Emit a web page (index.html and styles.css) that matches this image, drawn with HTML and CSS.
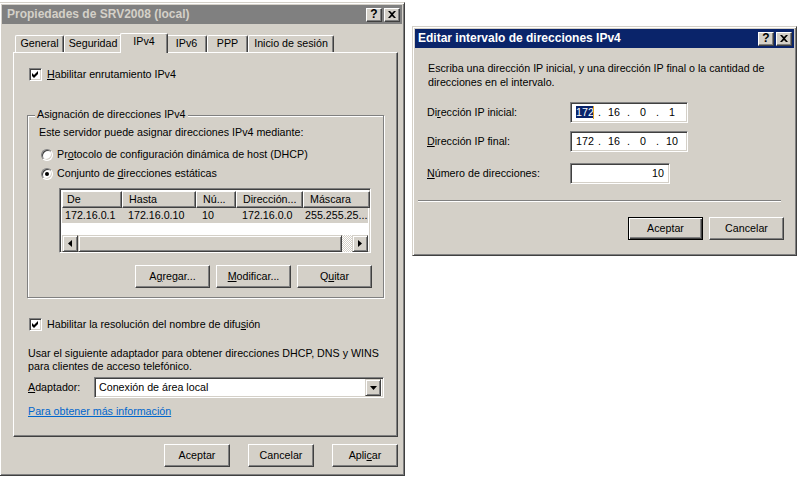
FILE: index.html
```html
<!DOCTYPE html>
<html lang="es">
<head>
	<meta charset="UTF-8">
	<title>Propiedades de SRV2008 (local)</title>
	<link rel="stylesheet" href="styles.css">
</head>
<body>
<div class="desk">

	<!-- ventana de propiedades (inactiva) -->
	<div class="win props">
		<div class="caption inactive">
			<span>Propiedades de SRV2008 (local)</span>
			<span class="cap-btns">
				<span class="cap-btn">?</span>
				<span class="cap-btn"><svg width="8" height="7" viewBox="0 0 8 7"><path d="M0 0h2l2 2 2-2h2L5 3.5 8 7H6L4 5 2 7H0l3-3.5z"/></svg></span>
			</span>
		</div>
		<div class="props-body">
			<div class="tabs">
				<span class="tab t-general">General</span>
				<span class="tab t-seg">Seguridad</span>
				<span class="tab sel t-ipv4">IPv4</span>
				<span class="tab t-ipv6">IPv6</span>
				<span class="tab t-ppp">PPP</span>
				<span class="tab t-inicio">Inicio de sesión</span>
			</div>
			<div class="panel">
				<div class="opt first">
					<span class="check sunken"><svg width="9" height="9" viewBox="0 0 9 9"><path d="M1 3 3 5 7 1v3L3 8 1 6z"/></svg></span>
					<span><u>H</u>abilitar enrutamiento IPv4</span>
				</div>

				<div class="group">
					<span class="legend">Asignación de direcciones IPv4</span>
					<div class="line">Este servidor puede asignar direcciones IPv4 mediante:</div>
					<div class="opt r1">
						<span class="radio"></span>
						<span>Pr<u>o</u>tocolo de configuración dinámica de host (DHCP)</span>
					</div>
					<div class="opt r2">
						<span class="radio on"></span>
						<span>Conjunto de <u>d</u>irecciones estáticas</span>
					</div>

					<div class="list sunken">
						<div class="lv-head">
							<span class="col c1">De</span>
							<span class="col c2">Hasta</span>
							<span class="col c3">Nú...</span>
							<span class="col c4">Dirección...</span>
							<span class="col c5">Máscara</span>
						</div>
						<div class="lv-row">
							<span class="col c1">172.16.0.1</span>
							<span class="col c2">172.16.0.10</span>
							<span class="col c3">10</span>
							<span class="col c4">172.16.0.0</span>
							<span class="col c5">255.255.25...</span>
						</div>
						<div class="lv-blank"></div>
						<div class="hscroll">
							<span class="sb-btn"><svg width="4" height="7" viewBox="0 0 4 7"><path d="M4 0v7L0 3.5z"/></svg></span>
							<span class="sb-thumb"></span>
							<span class="sb-track"></span>
							<span class="sb-btn"><svg width="4" height="7" viewBox="0 0 4 7"><path d="M0 0v7l4-3.5z"/></svg></span>
						</div>
					</div>

					<div class="btn-row">
						<button class="btn wide">A<u>g</u>regar...</button>
						<button class="btn wide"><u>M</u>odificar...</button>
						<button class="btn wide">Q<u>u</u>itar</button>
					</div>
				</div>

				<div class="opt second">
					<span class="check sunken"><svg width="9" height="9" viewBox="0 0 9 9"><path d="M1 3 3 5 7 1v3L3 8 1 6z"/></svg></span>
					<span>Habilitar la resolución del nombre de difu<u>s</u>ión</span>
				</div>

				<div class="text-block">Usar el siguiente adaptador para obtener direcciones DHCP, DNS y WINS<br>para clientes de acceso telefónico.</div>

				<div class="adapter">
					<span class="adapter-label"><u>A</u>daptador:</span>
					<div class="combo sunken">
						<span class="combo-text">Conexión de área local</span>
						<span class="combo-btn"><svg width="7" height="4" viewBox="0 0 7 4"><path d="M0 0h7L3.5 4z"/></svg></span>
					</div>
				</div>

				<a class="more" href="#">Para obtener más información</a>
			</div>

			<div class="dlg-btns">
				<button class="btn">Aceptar</button>
				<button class="btn">Cancelar</button>
				<button class="btn">Apli<u>c</u>ar</button>
			</div>
		</div>
	</div>

	<!-- dialogo de intervalo (activo) -->
	<div class="win range">
		<div class="caption active">
			<span>Editar intervalo de direcciones IPv4</span>
			<span class="cap-btns">
				<span class="cap-btn">?</span>
				<span class="cap-btn"><svg width="8" height="7" viewBox="0 0 8 7"><path d="M0 0h2l2 2 2-2h2L5 3.5 8 7H6L4 5 2 7H0l3-3.5z"/></svg></span>
			</span>
		</div>
		<div class="range-body">
			<div class="desc">Escriba una dirección IP inicial, y una dirección IP final o la cantidad de<br>direcciones en el intervalo.</div>

			<div class="field-row f1">
				<span class="field-label">Di<u>r</u>ección IP inicial:</span>
				<div class="ipbox sunken">
					<span class="oct"><span class="hl">172</span><span class="caret"></span></span><span class="dot">.</span>
					<span class="oct">16</span><span class="dot">.</span>
					<span class="oct">0</span><span class="dot">.</span>
					<span class="oct">1</span>
				</div>
			</div>
			<div class="field-row f2">
				<span class="field-label"><u>D</u>irección IP final:</span>
				<div class="ipbox sunken">
					<span class="oct">172</span><span class="dot">.</span>
					<span class="oct">16</span><span class="dot">.</span>
					<span class="oct">0</span><span class="dot">.</span>
					<span class="oct">10</span>
				</div>
			</div>
			<div class="field-row f3">
				<span class="field-label"><u>N</u>úmero de direcciones:</span>
				<div class="numbox sunken">10</div>
			</div>

			<div class="sep"></div>

			<div class="range-btns">
				<button class="btn wide default">Aceptar</button>
				<button class="btn wide">Cancelar</button>
			</div>
		</div>
	</div>

</div>
</body>
</html>
```

FILE: styles.css
```css
* { box-sizing:border-box; }
body { margin:0; background:#fff; font-family:"Liberation Sans", Arial, sans-serif; font-size:10.7px; line-height:13px; color:#000; }
u { text-decoration-thickness:1px; text-underline-offset:1px; }
.desk { position:relative; width:805px; height:490px; overflow:hidden; }

/* ventanas clasicas */
.win { position:absolute; display:flex; flex-direction:column; background:#d4d0c8; padding:2px;
	border:1px solid; border-color:#d4d0c8 #404040 #404040 #d4d0c8;
	box-shadow:inset 1px 1px #fff, inset -1px -1px #808080; }
.props { left:-1px; top:2px; width:406px; height:474px; }
.range { left:412px; top:26px; width:385px; height:230px; }

.caption { height:19px; flex:none; display:flex; align-items:center; justify-content:space-between; padding:0 2px 0 3px; font-size:12px; font-weight:bold; white-space:nowrap; }
.props .caption { padding-left:5px; }
.caption.inactive { background:#808080; color:#d4d0c8; }
.caption.active { background:#0a246a; color:#fff; }
.cap-btns { display:flex; gap:2px; }
.cap-btn { width:16px; height:14px; display:flex; align-items:center; justify-content:center; background:#d4d0c8; color:#000; font-size:12px; font-weight:bold;
	border:1px solid; border-color:#fff #404040 #404040 #fff; box-shadow:inset -1px -1px #808080; }

.sunken { background:#fff; border:1px solid; border-color:#808080 #fff #fff #808080; box-shadow:inset 1px 1px #404040, inset -1px -1px #d4d0c8; }

.btn { width:66px; height:23px; padding:0; display:flex; align-items:center; justify-content:center; font:inherit; color:#000; background:#d4d0c8;
	border:1px solid; border-color:#fff #404040 #404040 #fff; box-shadow:inset -1px -1px #808080; }
.btn.wide { width:75px; }
.btn.default { border-color:#000; box-shadow:inset 1px 1px #fff, inset -1px -1px #404040, inset -2px -2px #808080; }

/* propiedades */
.props-body { padding:9px 4px 0 11px; }
.tabs { display:flex; align-items:flex-end; height:19px; padding-left:2px; }
.tab { height:17px; display:flex; align-items:center; justify-content:center; padding-bottom:1px; white-space:nowrap;
	border:1px solid; border-bottom:0; border-color:#fff #404040 #404040 #fff; border-radius:2px 2px 0 0; box-shadow:inset -1px 0 #808080; }
.tab.sel { position:relative; z-index:1; height:20px; margin:0 -2px -1px; padding-bottom:4px; background:#d4d0c8; }
.t-general { width:49px; }
.t-seg { width:58px; }
.t-ipv4 { width:48px; }
.t-ipv6 { width:41px; }
.t-ppp { width:41px; }
.t-inicio { width:86px; }

.panel { width:385px; height:385px; padding:15px 0 0 14px;
	border:1px solid; border-color:#fff #404040 #404040 #fff; box-shadow:inset -1px -1px #808080; }
.opt { display:flex; align-items:center; height:13px; white-space:nowrap; }
.opt.first, .opt.second { margin-left:1px; gap:5px; }
.opt.second { margin-top:20px; }
.check { width:13px; height:13px; flex:none; display:flex; align-items:center; justify-content:center; }
.radio { width:12px; height:12px; flex:none; position:relative; border-radius:50%; background:#fff;
	border:1px solid; border-color:#808080 #fff #fff #808080; box-shadow:inset 1px 1px #404040, inset -1px -1px #d4d0c8; }
.radio.on:after { content:""; position:absolute; left:3px; top:3px; width:4px; height:4px; border-radius:50%; background:#000; }

.group { position:relative; width:357px; margin-top:34px; margin-left:-1px; padding:10px 11px 9px 11px;
	border:1px solid #808080; box-shadow:inset 1px 1px #fff, 1px 1px #fff; }
.legend { position:absolute; left:7px; top:-8px; padding:0 2px; background:#d4d0c8; white-space:nowrap; }
.line { white-space:nowrap; }
.opt.r1, .opt.r2 { margin-left:2px; gap:4px; }
.opt.r1 { margin-top:9px; }
.opt.r2 { margin-top:6px; }

.list { width:312px; height:65px; margin:8px 0 0 20px; padding:2px; display:flex; flex-direction:column; overflow:hidden; }
.lv-head, .lv-row { display:flex; flex:none; white-space:nowrap; }
.lv-head .col { height:17px; padding:1px 0 0 6px; background:#d4d0c8;
	border:1px solid; border-color:#fff #404040 #404040 #fff; box-shadow:inset -1px -1px #808080; }
.lv-head .c1 { padding-left:4px; }
.lv-row { height:15px; background:#d4d0c8; }
.lv-row .col { padding:1px 0 0 6px; }
.lv-row .c1 { padding-left:3px; }
.lv-row .c5 { padding-left:2px; }
.col { overflow:hidden; flex:none; }
.c1 { width:60px; }
.c2 { width:74px; }
.c3 { width:40px; }
.c4 { width:67px; }
.c5 { width:67px; }
.lv-blank { height:12px; flex:none; }
.hscroll { display:flex; height:17px; flex:none; }
.sb-btn { width:16px; display:flex; align-items:center; justify-content:center; background:#d4d0c8;
	border:1px solid; border-color:#d4d0c8 #404040 #404040 #d4d0c8; box-shadow:inset 1px 1px #fff, inset -1px -1px #808080; }
.sb-thumb { width:266px; background:#d4d0c8;
	border:1px solid; border-color:#d4d0c8 #404040 #404040 #d4d0c8; box-shadow:inset 1px 1px #fff, inset -1px -1px #808080; }
.sb-track { width:10px; background:repeating-conic-gradient(#fff 0 25%, #d4d0c8 0 50%) 0 0 / 2px 2px; }

.btn-row { display:flex; justify-content:flex-end; gap:6px; margin-top:12px; }

.text-block { margin-top:16px; white-space:nowrap; }
.adapter { display:flex; align-items:center; margin-top:4px; }
.adapter-label { width:66px; }
.combo { width:290px; height:21px; display:flex; align-items:center; justify-content:space-between; padding:2px; }
.combo-text { padding-left:2px; }
.combo-btn { width:16px; height:17px; display:flex; align-items:center; justify-content:center; background:#d4d0c8;
	border:1px solid; border-color:#d4d0c8 #404040 #404040 #d4d0c8; box-shadow:inset 1px 1px #fff, inset -1px -1px #808080; }
.more { display:inline-block; margin-top:7px; color:#0066cc; }

.dlg-btns { display:flex; justify-content:flex-end; gap:18px; margin-top:7px; }

/* intervalo */
.range-body { padding:13px 10px 0 0; }
.desc { margin-left:13px; line-height:14px; white-space:nowrap; }
.field-row { display:flex; align-items:center; height:21px; margin-left:12px; }
.field-row.f1 { margin-top:13px; }
.field-row.f2 { margin-top:8px; }
.field-row.f3 { margin-top:11px; }
.field-label { width:143px; white-space:nowrap; }
.ipbox { width:118px; height:21px; display:flex; align-items:center; padding:0 2px; }
.oct { width:24px; text-align:center; position:relative; }
.dot { width:5px; text-align:center; }
.hl { background:#0a246a; color:#fff; }
.caret { position:absolute; top:0; right:3px; width:1px; height:13px; background:#e0a020; }
.numbox { width:100px; height:21px; padding:3px 5px 0 0; text-align:right; }
.sep { width:363px; margin:16px 0 0 3px; border-top:1px solid #808080; border-bottom:1px solid #fff; }
.range-btns { display:flex; justify-content:flex-end; gap:6px; margin-top:15px; }
```
